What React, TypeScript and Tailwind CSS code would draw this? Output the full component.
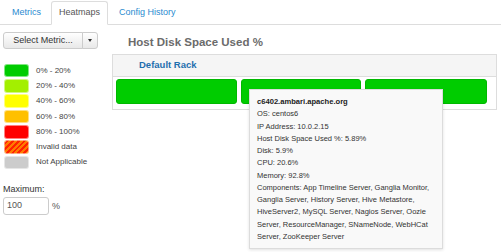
import React from "react";

const legend: { color: string; label: string; striped?: boolean }[] = [
  { color: "#00cc00", label: "0% - 20%" },
  { color: "#a3ef00", label: "20% - 40%" },
  { color: "#ffff00", label: "40% - 60%" },
  { color: "#ffc000", label: "60% - 80%" },
  { color: "#ff0000", label: "80% - 100%" },
  { color: "#ff8000", label: "Invalid data", striped: true },
  { color: "#cccccc", label: "Not Applicable" },
];

const tipLines = [
  "OS: centos6",
  "IP Address: 10.0.2.15",
  "Host Disk Space Used %: 5.89%",
  "Disk: 5.9%",
  "CPU: 20.6%",
  "Memory: 92.8%",
  "Components: App Timeline Server, Ganglia Monitor,",
  "Ganglia Server, History Server, Hive Metastore,",
  "HiveServer2, MySQL Server, Nagios Server, Oozie",
  "Server, ResourceManager, SNameNode, WebHCat",
  "Server, ZooKeeper Server",
];

export default function App() {
  return (
    <div
      className="relative w-[501px] h-[252px] overflow-hidden bg-white text-[#333]"
      style={{ fontFamily: '"Liberation Sans", Arial, sans-serif' }}
    >
      {/* Tabs */}
      <div className="flex h-[25px] items-end border-b border-[#dddddd] pl-[3px]">
        <div className="-mb-px flex h-[24px] items-center border border-transparent px-[8px] text-[9px] text-[#2a8bd0]">
          Metrics
        </div>
        <div className="-mb-px ml-px flex h-[24px] items-center rounded-t-[3px] border border-[#dddddd] border-b-white bg-white px-[7px] text-[9px] text-[#555]">
          Heatmaps
        </div>
        <div className="-mb-px flex h-[24px] items-center border border-transparent px-[10px] text-[9px] text-[#2a8bd0]">
          Config History
        </div>
      </div>

      <div className="flex pt-[7px]">
        {/* Left column */}
        <div className="ml-[3px] flex w-[96px] flex-col">
          <div className="flex h-[17px] w-[95px]">
            <div className="flex w-[80px] items-center justify-center rounded-l-[3px] border border-[#cccccc] bg-gradient-to-b from-white to-[#e8e8e8] text-[9px] text-[#333]">
              Select Metric...
            </div>
            <div className="-ml-px flex w-[16px] items-center justify-center rounded-r-[3px] border border-[#cccccc] bg-gradient-to-b from-white to-[#e8e8e8]">
              <div className="h-0 w-0 border-x-[2.5px] border-t-[3px] border-x-transparent border-t-[#333]" />
            </div>
          </div>

          <div className="mt-[14px] flex flex-col">
            {legend.map((l) => (
              <div key={l.label} className="flex h-[15.3px] items-center">
                <div
                  className="ml-px h-[13.5px] w-[25px] rounded-[3px] border border-[#ffffff80]"
                  style={
                    l.striped
                      ? {
                          background:
                            "repeating-linear-gradient(-45deg, #ff7a00 0px, #ff7a00 2px, #ff2200 2px, #ff2200 4px)",
                        }
                      : { backgroundColor: l.color }
                  }
                />
                <span className="ml-[7px] text-[8px] text-[#444]">{l.label}</span>
              </div>
            ))}
          </div>

          <div className="mt-[14px] text-[9px] leading-[11px] text-[#333]">Maximum:</div>
          <div className="mt-[1.5px] flex items-center">
            <div className="flex h-[18px] w-[46px] items-center rounded-[3px] border border-[#cccccc] pl-[3px] text-[9px] text-[#555]">
              100
            </div>
            <span className="ml-[3px] mt-[3px] text-[9px] text-[#555]">%</span>
          </div>
        </div>

        {/* Right column */}
        <div className="ml-[13px] flex w-[385px] flex-col">
          <div className="mt-[3px] pl-[16px] text-[11.5px] font-bold leading-[14px] text-[#6b6b6b]">
            Host Disk Space Used %
          </div>
          <div className="mt-[5px] border border-[#dddddd]">
            <div className="flex h-[22px] items-center border-b border-[#dddddd] bg-[#f5f5f5] pl-[26px] text-[9.5px] font-bold text-[#1f6fae]">
              Default Rack
            </div>
            <div className="flex gap-[4px] bg-white pb-[5px] pl-[3px] pt-[2px]">
              <div className="h-[25px] w-[121px] rounded-[3px] border border-[#00b800] bg-[#00cc00]" />
              <div className="h-[25px] w-[120px] rounded-[3px] border border-[#00b800] bg-[#00cc00]" />
              <div className="h-[25px] w-[122px] rounded-[3px] border border-[#00b800] bg-[#00cc00]" />
            </div>
          </div>
        </div>
      </div>

      {/* Tooltip */}
      <div className="absolute left-[249px] top-[89px] h-[160px] w-[194px] border border-[#dcdcdc] bg-[#f9f9f9] pl-[7px] pt-[6px] shadow-[0_1px_3px_rgba(0,0,0,0.12)]">
        <div className="whitespace-nowrap text-[7.6px] font-bold leading-[12.27px] text-[#222]">
          c6402.ambari.apache.org
        </div>
        {tipLines.map((t) => (
          <div key={t} className="whitespace-nowrap text-[7.5px] leading-[12.27px] text-[#333]">
            {t}
          </div>
        ))}
      </div>
    </div>
  );
}
